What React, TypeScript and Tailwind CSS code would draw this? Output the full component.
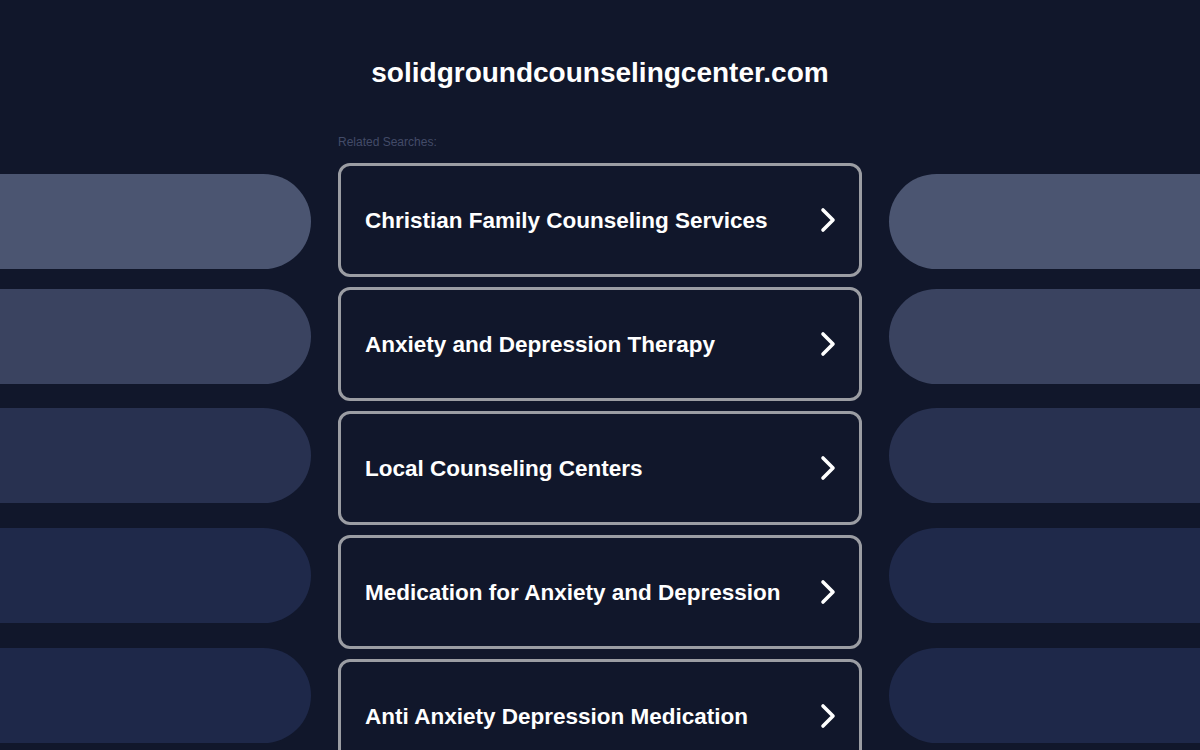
import React from "react";

const cards = [
  "Christian Family Counseling Services",
  "Anxiety and Depression Therapy",
  "Local Counseling Centers",
  "Medication for Anxiety and Depression",
  "Anti Anxiety Depression Medication",
];

const pills = [
  { bg: "bg-[#4b5571]", mt: "mt-0" },
  { bg: "bg-[#3a4360]", mt: "mt-[20px]" },
  { bg: "bg-[#283150]", mt: "mt-[24px]" },
  { bg: "bg-[#1f294a]", mt: "mt-[25px]" },
  { bg: "bg-[#1e2849]", mt: "mt-[25px]" },
];

function Chevron() {
  return (
    <svg width="22" height="28" viewBox="0 0 22 28" fill="none" className="shrink-0">
      <path d="M6 4 L16 14 L6 24" stroke="white" strokeWidth="3.6" strokeLinecap="round" strokeLinejoin="round" />
    </svg>
  );
}

export default function App() {
  return (
    <div
      className="w-[1200px] h-[750px] overflow-hidden bg-[#11172b] flex flex-col"
      style={{ fontFamily: '"Liberation Sans", Arial, sans-serif' }}
    >
      <div className="h-[144px] flex flex-col items-center shrink-0">
        <h1 className="mt-[56px] text-[28px] leading-[34px] font-bold text-white">
          solidgroundcounselingcenter.com
        </h1>
      </div>
      <div className="flex flex-row gap-[27px]">
        <div className="flex-1 flex flex-col pt-[30px]">
          {pills.map((p, i) => (
            <div key={i} className={`${p.mt} h-[95px] rounded-r-full ${p.bg}`} />
          ))}
        </div>
        <div className="w-[524px] shrink-0 flex flex-col -mt-[10px]">
          <div className="text-[12px] leading-[14px] text-[#434b68] mt-[1px] mb-[14px]">Related Searches:</div>
          <div className="flex flex-col gap-[10px]">
            {cards.map((c) => (
              <div
                key={c}
                className="h-[114px] shrink-0 rounded-[12px] border-[3px] border-[#9b9da3] bg-[#11172b] flex flex-row items-center justify-between pl-[24px] pr-[20px]"
              >
                <span className="mt-[2px] text-[22.5px] font-bold text-white">{c}</span>
                <Chevron />
              </div>
            ))}
          </div>
        </div>
        <div className="flex-1 flex flex-col pt-[30px]">
          {pills.map((p, i) => (
            <div key={i} className={`${p.mt} h-[95px] rounded-l-full ${p.bg}`} />
          ))}
        </div>
      </div>
    </div>
  );
}
